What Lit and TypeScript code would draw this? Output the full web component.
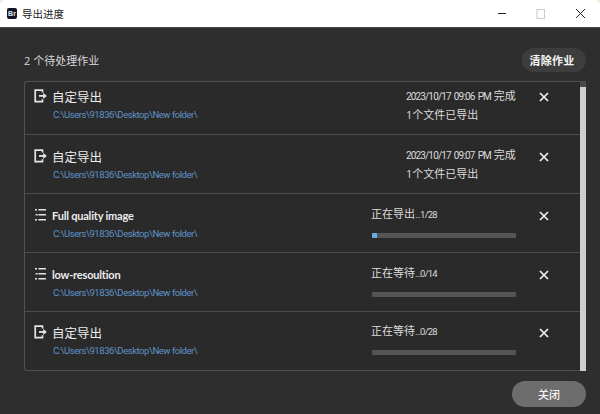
import { LitElement, html, css, svg } from "lit";
import { customElement } from "lit/decorators.js";

type Job = {
  kind: "export" | "list";
  title: string;
  done?: [string, string, string];
  label?: string;
  count?: string;
  pct?: number;
  height: number;
  pad: number;
};

const PATH = "C:\\Users\\91836\\Desktop\\New folder\\";

const JOBS: Job[] = [
  { kind: "export", title: "自定导出", done: ["2023/10/17 09:06 PM", "完成", "1个文件已导出"], height: 53, pad: 5 },
  { kind: "export", title: "自定导出", done: ["2023/10/17 09:07 PM", "完成", "1个文件已导出"], height: 59, pad: 12 },
  { kind: "list", title: "Full quality image", label: "正在导出", count: "...1/28", pct: 3.5, height: 59, pad: 12 },
  { kind: "list", title: "low-resoultion", label: "正在等待", count: "...0/14", pct: 0, height: 59, pad: 12 },
  { kind: "export", title: "自定导出", label: "正在等待", count: "...0/28", pct: 0, height: 58, pad: 11 },
];

const exportIcon = svg`<svg class="job-icon" viewBox="0 0 14 14" width="14" height="14" fill="none">
  <path d="M8.5 3.6V1.2H1.2v11.4h7.3v-2.4" stroke="#e4e4e4" stroke-width="1.7"/>
  <path d="M5 6.9h5" stroke="#e4e4e4" stroke-width="1.8"/>
  <path d="M9.2 3.8l3.6 3.1-3.6 3.1z" fill="#e4e4e4"/>
</svg>`;

const listIcon = svg`<svg class="job-icon" viewBox="0 0 14 14" width="14" height="14" fill="#e4e4e4">
  <rect x="1" y="1" width="2" height="1.5"/><rect x="4.4" y="1" width="7.6" height="1.5"/>
  <rect x="1.6" y="6" width="2" height="1.5"/><rect x="4.4" y="6" width="7.6" height="1.5"/>
  <rect x="1" y="11" width="2" height="1.5"/><rect x="4.4" y="11" width="7.6" height="1.5"/>
</svg>`;

const closeIcon = svg`<svg viewBox="0 0 10 10" width="10" height="10" fill="none" stroke="#f2f2f2" stroke-width="1.7">
  <path d="M1 1l8 8M9 1l-8 8"/>
</svg>`;

@customElement("app-root")
export class AppRoot extends LitElement {
  static styles = css`
    :host {
      display: flex;
      flex-direction: column;
      width: 600px;
      height: 414px;
      overflow: hidden;
      background: #2e2e2e;
      color: #e6e6e6;
      font-family: "Open Sans", "Noto Sans CJK SC", sans-serif;
    }
    .chrome { flex: none; background: #ece8dc; }
    .titlebar {
      height: 28px;
      box-sizing: border-box;
      background: #fff;
      border-bottom: 1px solid #4a4a4a;
      border-radius: 5px 5px 0 0;
      display: flex;
      align-items: center;
      padding: 0 14px 0 7px;
      color: #222;
      font-size: 10.5px;
    }
    .logo {
      width: 10px;
      height: 11px;
      background: #101522;
      border-radius: 2px;
      color: #e6e9f2;
      font: 700 7px/11px "Liberation Sans", sans-serif;
      text-align: center;
      margin-right: 5px;
    }
    .wintitle { flex: 1; }
    .winbtns { display: flex; align-items: center; gap: 29px; }
    .body {
      flex: 1;
      display: flex;
      flex-direction: column;
      padding: 20px 14px 7px 24px;
      min-height: 0;
    }
    .head {
      display: flex;
      align-items: center;
      justify-content: space-between;
      height: 24px;
      font-size: 11px;
      color: #d8d8d8;
    }
    .pill {
      display: flex;
      align-items: center;
      justify-content: center;
      border-radius: 12px;
      color: #f4f4f4;
      font-weight: 500;
    }
    .clear {
      box-sizing: border-box;
      width: 64px;
      height: 24px;
      padding-right: 4px;
      background: #3d3d3d;
      font-size: 11px;
      letter-spacing: 0.3px;
      font-weight: 700;
    }
    .list-wrap {
      display: flex;
      height: 290px;
      margin-top: 9px;
    }
    .list {
      flex: 1;
      border: 1px solid #505050;
      border-right: none;
      border-radius: 3px 0 0 3px;
      background: #2a2a2a;
    }
    .row {
      box-sizing: border-box;
      display: grid;
      grid-template-columns: 337px 168px 1fr;
      align-items: start;
      border-bottom: 1px solid #4c4c4c;
      padding-left: 9px;
    }
    .row:last-child { border-bottom: none; }
    .main { display: flex; flex-direction: column; }
    .title-line { display: flex; align-items: center; gap: 5px; height: 18px; }
    .job-icon { flex: none; }
    .title { font-size: 12.5px; color: #ececec; margin-left: -1px; }
    .title.latin { font-family: "Lato", sans-serif; font-size: 11px; font-weight: 700; letter-spacing: -0.2px; }
    .path {
      margin: 2px 0 0 19px;
      font-family: "Roboto", sans-serif;
      font-size: 9.5px;
      letter-spacing: -0.45px;
      line-height: 16px;
      color: #5f93c9;
      white-space: nowrap;
    }
    .status { margin-top: 1px; font-size: 11px; color: #dcdcdc; line-height: 14px; white-space: nowrap; }
    .status.done { padding-left: 35px; margin-top: -1px; line-height: 18px; }
    .row:first-child .status.done { margin-top: 0; }
    .status .num { font-family: "Roboto", sans-serif; font-size: 9.5px; letter-spacing: -0.8px; }
    .status.done .num { font-size: 10px; letter-spacing: -0.85px; word-spacing: 1.5px; }
    .track { width: 144px; height: 5px; margin: 11px 0 0 1px; background: #555; border-radius: 1px; overflow: hidden; }
    .fill { height: 100%; background: #66aee8; }
    .x { display: flex; align-items: center; height: 18px; padding-top: 1px; }
    .scroll { flex: none; width: 6px; background: #4a4a4a; display: flex; padding-top: 6px; box-sizing: border-box; }
    .thumb { flex: 1; background: #cfcfcf; }
    .foot { display: flex; justify-content: flex-end; margin-top: 10px; }
    .close { width: 74px; height: 26px; background: #6d6d6d; border-radius: 13px; font-size: 11px; }
  `;

  private renderStatus(j: Job) {
    if (j.done) {
      return html`<div class="status done">
        <div><span class="num">${j.done[0]}</span> ${j.done[1]}</div>
        <div>${j.done[2]}</div>
      </div>`;
    }
    return html`<div class="status">
      <div>${j.label}<span class="num">${j.count}</span></div>
      <div class="track"><div class="fill" style="width:${j.pct}%"></div></div>
    </div>`;
  }

  render() {
    return html`
      <div class="chrome">
        <div class="titlebar">
          <div class="logo">Br</div>
          <div class="wintitle">导出进度</div>
          <div class="winbtns">
            <svg width="10" height="10" viewBox="0 0 10 10"><path d="M1 4.5h8" stroke="#222" stroke-width="1"/></svg>
            <svg width="10" height="10" viewBox="0 0 10 10" fill="none"><rect x="1" y="0.5" width="7.5" height="9" stroke="#ccc"/></svg>
            <svg width="11" height="11" viewBox="0 0 11 11" fill="none"><path d="M1 1l9 9M10 1l-9 9" stroke="#222"/></svg>
          </div>
        </div>
      </div>
      <div class="body">
        <div class="head">
          <span>2 个待处理作业</span>
          <div class="pill clear">清除作业</div>
        </div>
        <div class="list-wrap">
          <div class="list">
            ${JOBS.map(
              (j) => html`<div class="row" style="height:${j.height}px;padding-top:${j.pad}px">
                <div class="main">
                  <div class="title-line">
                    ${j.kind === "export" ? exportIcon : listIcon}
                    <span class="title ${j.kind === "list" ? "latin" : ""}">${j.title}</span>
                  </div>
                  <div class="path">${PATH}</div>
                </div>
                ${this.renderStatus(j)}
                <div class="x">${closeIcon}</div>
              </div>`
            )}
          </div>
          <div class="scroll"><div class="thumb"></div></div>
        </div>
        <div class="foot"><div class="pill close">关闭</div></div>
      </div>
    `;
  }
}
